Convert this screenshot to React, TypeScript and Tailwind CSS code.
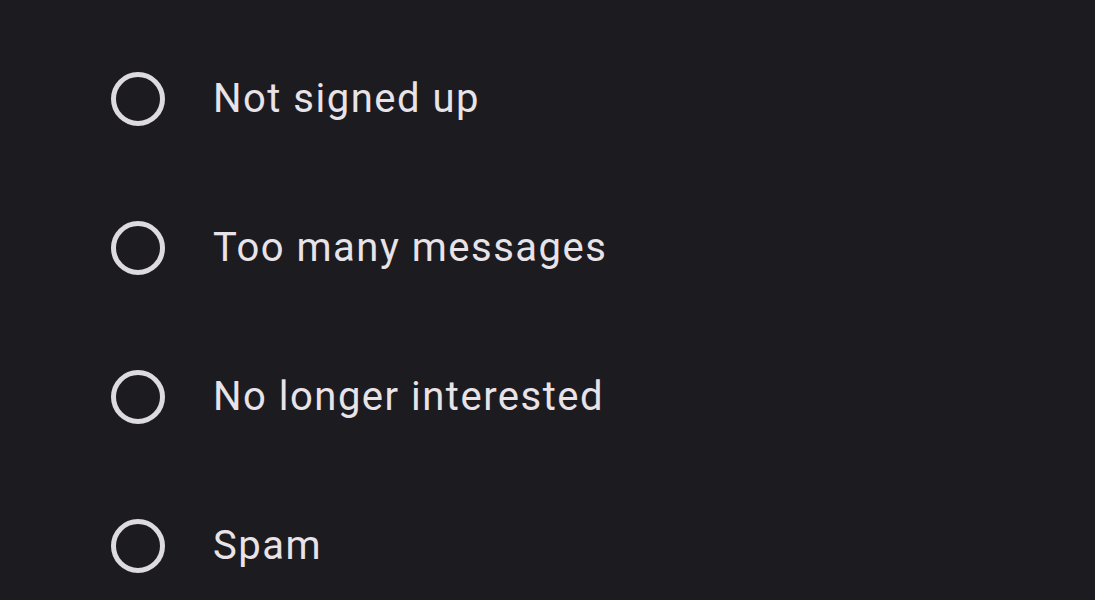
const reasons = ["Not signed up", "Too many messages", "No longer interested", "Spam"]

export default function App() {
  return (
    <div className="w-[1095px] h-[600px] overflow-hidden bg-[#1c1b20] pt-[24px] font-['Roboto',sans-serif]">
      {reasons.map((reason) => (
        <div key={reason} className="h-[149px] flex items-center pl-[111px]">
          <div className="w-[54px] h-[54px] rounded-full border-[5px] border-[#dedbe0] shrink-0" />
          <span className="ml-[48px] text-[40px] leading-none text-[#e7e3e8] tracking-[1.5px]">{reason}</span>
        </div>
      ))}
    </div>
  )
}
